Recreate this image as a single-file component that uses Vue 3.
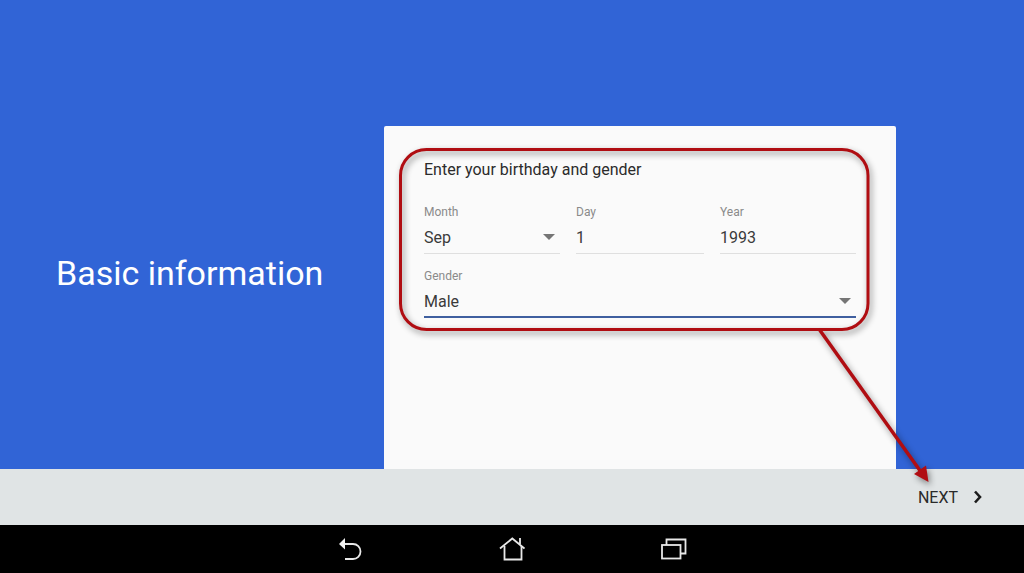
<template>
  <div class="screen">
    <div class="main">
      <div class="intro">
        <h1 class="intro-title">Basic information</h1>
      </div>
      <div class="card">
        <p class="card-title">Enter your birthday and gender</p>
        <div class="date-row">
          <div v-for="field in dateFields" :key="field.label" class="field">
            <span class="field-label">{{ field.label }}</span>
            <div class="field-value">
              <span>{{ field.value }}</span>
              <span v-if="field.select" class="caret"></span>
            </div>
          </div>
        </div>
        <div class="field field-active">
          <span class="field-label">Gender</span>
          <div class="field-value">
            <span>Male</span>
            <span class="caret"></span>
          </div>
        </div>
      </div>
    </div>

    <div class="footer">
      <div class="next">
        <span>NEXT</span>
        <svg width="10" height="14" viewBox="0 0 10 14">
          <path d="M2 1.500L7 7L2 12.500" fill="none" stroke="#1c1c1c" stroke-width="2.600" />
        </svg>
      </div>
    </div>

    <div class="navbar">
      <svg class="nav-icon" width="24" height="22" viewBox="0 0 24 22">
        <path d="M6 6H14A7.500 7.500 0 0 1 14 21H6" fill="none" stroke="#e8e8e8" stroke-width="1.800" />
        <path d="M0 6L6 0V11.500Z" fill="#f2f2f2" />
      </svg>
      <svg class="nav-icon" width="26" height="24" viewBox="0 0 26 24">
        <path d="M1 11.500L13.300 1.500L25.500 11.500" fill="none" stroke="#e8e8e8" stroke-width="1.800" />
        <path d="M5.500 9V22.500H22.500V9M21 1V7" fill="none" stroke="#e8e8e8" stroke-width="1.800" />
      </svg>
      <svg class="nav-icon" width="26" height="22" viewBox="0 0 26 22">
        <rect x="1" y="7" width="18.500" height="13.500" fill="none" stroke="#e8e8e8" stroke-width="1.800" />
        <path d="M5.500 7V1.500H24.500V15.500H19.500" fill="none" stroke="#e8e8e8" stroke-width="1.800" />
      </svg>
    </div>

    <!-- callout drawn over the screenshot -->
    <svg class="callout" width="1024" height="573" viewBox="0 0 1024 573">
      <rect x="400.500" y="149.500" width="467.500" height="180" rx="26" fill="none" stroke="#b00d12" stroke-width="3" />
      <path d="M819 329L921 472" fill="none" stroke="#b00d12" stroke-width="3.500" />
      <path d="M928.500 482L914 474L926 465.500Z" fill="#b00d12" />
    </svg>
  </div>
</template>

<script setup>
const dateFields = [
  { label: 'Month', value: 'Sep', select: true },
  { label: 'Day', value: '1', select: false },
  { label: 'Year', value: '1993', select: false }
]
</script>

<style>
html, body {
  margin: 0;
  background: #000;
}
</style>

<style scoped>
.screen {
  position: relative;
  width: 1024px;
  height: 573px;
  display: flex;
  flex-direction: column;
  overflow: hidden;
  font-family: Roboto, "Liberation Sans", sans-serif;
}

.main {
  flex: 1;
  display: flex;
  min-height: 0;
  padding-top: 126px;
  background: #3164d6;
}

.intro {
  width: 384px;
  padding: 127px 0 0 56px;
  box-sizing: border-box;
}

.intro-title {
  margin: 0;
  font-size: 34px;
  line-height: 40px;
  font-weight: 400;
  color: #fff;
}

.card {
  width: 512px;
  box-sizing: border-box;
  padding: 34px 40px 0;
  background: #fafafa;
  border-radius: 2px 2px 0 0;
}

.card-title {
  margin: 0 0 24px;
  font-size: 16px;
  line-height: 20px;
  color: #2b2b2b;
}

.date-row {
  display: grid;
  grid-template-columns: 136px 128px 136px;
  gap: 16px;
  margin-bottom: 14px;
}

.field {
  display: flex;
  flex-direction: column;
  border-bottom: 1px solid #dfdfdf;
}

.field-active {
  border-bottom: 2px solid #3f5f9f;
}

.field-label {
  font-size: 12px;
  line-height: 16px;
  color: #8a8a8a;
}

.field-value {
  display: flex;
  align-items: center;
  justify-content: space-between;
  height: 33px;
  padding-top: 1px;
  box-sizing: border-box;
  font-size: 16px;
  color: #3a3a3a;
}

.field-active .field-value {
  height: 32px;
  padding-top: 2px;
}

.caret {
  width: 0;
  height: 0;
  margin-right: 5px;
  border-left: 6px solid transparent;
  border-right: 6px solid transparent;
  border-top: 6px solid #757575;
}

.footer {
  height: 56px;
  display: flex;
  align-items: center;
  justify-content: flex-end;
  padding-right: 41px;
  background: #e0e4e5;
}

.next {
  display: flex;
  align-items: center;
  gap: 15px;
  font-size: 16px;
  color: #2a2a2a;
}

.navbar {
  height: 48px;
  display: flex;
  align-items: center;
  gap: 136px;
  padding-left: 339px;
  background: #000;
}

.nav-icon {
  display: block;
}

.callout {
  position: absolute;
  top: 0;
  left: 0;
  pointer-events: none;
  filter: drop-shadow(2px 3px 3px rgba(0, 0, 0, 0.45));
}
</style>
